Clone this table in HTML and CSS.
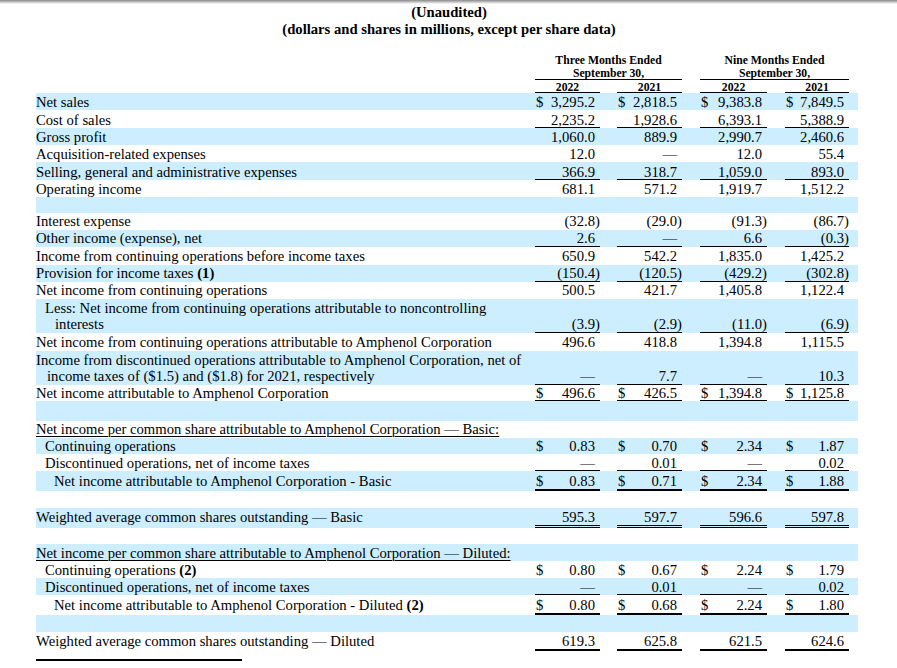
FILE: index.html
```html
<!DOCTYPE html>
<html lang="en">
<head>
<meta charset="utf-8">
<title>Condensed Consolidated Statements of Income</title>
<link rel="stylesheet" href="styles.css">
</head>
<body>
<div class="shade"></div>
<div class="title">
  <div>(Unaudited)</div>
  <div>(dollars and shares in millions, except per share data)</div>
</div>
<table class="fin">
  <colgroup>
    <col class="c-lb"><col class="c-a"><col class="c-g1"><col class="c-b"><col class="c-g2"><col class="c-c"><col class="c-g3"><col class="c-d"><col class="c-end">
  </colgroup>
  <tr class="hd">
    <td></td><td colspan="3" class="hc">Three Months Ended</td><td></td><td colspan="3" class="hc">Nine Months Ended</td><td></td>
  </tr>
  <tr class="hd">
    <td></td><td colspan="3" class="hc u">September 30,</td><td></td><td colspan="3" class="hc u">September 30,</td><td></td>
  </tr>
  <tr class="hd hd3">
    <td></td><td class="hc u">2022</td><td></td><td class="hc u">2021</td><td></td><td class="hc u">2022</td><td></td><td class="hc u">2021</td><td></td>
  </tr>

  <tr class="b h17 lo">
    <td class="lb">Net sales</td>
    <td class="v"><span class="d">$</span>3,295.2</td><td></td>
    <td class="v"><span class="d">$</span>2,818.5</td><td></td>
    <td class="v"><span class="d">$</span>9,383.8</td><td></td>
    <td class="v"><span class="d">$</span>7,849.5</td><td></td>
  </tr>
  <tr class="h18 lo">
    <td class="lb">Cost of sales</td>
    <td class="v u">2,235.2</td><td></td>
    <td class="v u">1,928.6</td><td></td>
    <td class="v u">6,393.1</td><td></td>
    <td class="v u">5,388.9</td><td></td>
  </tr>
  <tr class="b h17 lo">
    <td class="lb">Gross profit</td>
    <td class="v">1,060.0</td><td></td>
    <td class="v">889.9</td><td></td>
    <td class="v">2,990.7</td><td></td>
    <td class="v">2,460.6</td><td></td>
  </tr>
  <tr class="h17 lo">
    <td class="lb">Acquisition-related expenses</td>
    <td class="v">12.0</td><td></td>
    <td class="v">—</td><td></td>
    <td class="v">12.0</td><td></td>
    <td class="v">55.4</td><td></td>
  </tr>
  <tr class="b h18 lo">
    <td class="lb">Selling, general and administrative expenses</td>
    <td class="v u">366.9</td><td></td>
    <td class="v u">318.7</td><td></td>
    <td class="v u">1,059.0</td><td></td>
    <td class="v u">893.0</td><td></td>
  </tr>
  <tr class="h17 lo">
    <td class="lb">Operating income</td>
    <td class="v">681.1</td><td></td>
    <td class="v">571.2</td><td></td>
    <td class="v">1,919.7</td><td></td>
    <td class="v">1,512.2</td><td></td>
  </tr>
  <tr class="b h16"><td></td><td></td><td></td><td></td><td></td><td></td><td></td><td></td><td></td></tr>
  <tr class="h17 up">
    <td class="lb">Interest expense</td>
    <td class="v">(32.8<span class="p">)</span></td><td></td>
    <td class="v">(29.0<span class="p">)</span></td><td></td>
    <td class="v">(91.3<span class="p">)</span></td><td></td>
    <td class="v">(86.7<span class="p">)</span></td><td></td>
  </tr>
  <tr class="b h17 up">
    <td class="lb">Other income (expense), net</td>
    <td class="v u">2.6</td><td></td>
    <td class="v u">—</td><td></td>
    <td class="v u">6.6</td><td></td>
    <td class="v u">(0.3<span class="p">)</span></td><td></td>
  </tr>
  <tr class="h18 up">
    <td class="lb">Income from continuing operations before income taxes</td>
    <td class="v">650.9</td><td></td>
    <td class="v">542.2</td><td></td>
    <td class="v">1,835.0</td><td></td>
    <td class="v">1,425.2</td><td></td>
  </tr>
  <tr class="b h17 up">
    <td class="lb">Provision for income taxes <b>(1)</b></td>
    <td class="v u">(150.4<span class="p">)</span></td><td></td>
    <td class="v u">(120.5<span class="p">)</span></td><td></td>
    <td class="v u">(429.2<span class="p">)</span></td><td></td>
    <td class="v u">(302.8<span class="p">)</span></td><td></td>
  </tr>
  <tr class="h17 up">
    <td class="lb">Net income from continuing operations</td>
    <td class="v">500.5</td><td></td>
    <td class="v">421.7</td><td></td>
    <td class="v">1,405.8</td><td></td>
    <td class="v">1,122.4</td><td></td>
  </tr>
  <tr class="b h34 up">
    <td class="lb"><div class="l1 in9">Less: Net income from continuing operations attributable to noncontrolling</div><div class="in19">interests</div></td>
    <td class="v u">(3.9<span class="p">)</span></td><td></td>
    <td class="v u">(2.9<span class="p">)</span></td><td></td>
    <td class="v u">(11.0<span class="p">)</span></td><td></td>
    <td class="v u">(6.9<span class="p">)</span></td><td></td>
  </tr>
  <tr class="h18 up">
    <td class="lb">Net income from continuing operations attributable to Amphenol Corporation</td>
    <td class="v">496.6</td><td></td>
    <td class="v">418.8</td><td></td>
    <td class="v">1,394.8</td><td></td>
    <td class="v">1,115.5</td><td></td>
  </tr>
  <tr class="b h34 up">
    <td class="lb"><div class="l1">Income from discontinued operations attributable to Amphenol Corporation, net of</div><div class="in11">income taxes of ($1.5) and ($1.8) for 2021, respectively</div></td>
    <td class="v u">—</td><td></td>
    <td class="v u">7.7</td><td></td>
    <td class="v u">—</td><td></td>
    <td class="v u">10.3</td><td></td>
  </tr>
  <tr class="h16">
    <td class="lb">Net income attributable to Amphenol Corporation</td>
    <td class="v u"><span class="d">$</span>496.6</td><td></td>
    <td class="v u"><span class="d">$</span>426.5</td><td></td>
    <td class="v u"><span class="d">$</span>1,394.8</td><td></td>
    <td class="v u"><span class="d">$</span>1,125.8</td><td></td>
  </tr>
  <tr class="b h20"><td></td><td></td><td></td><td></td><td></td><td></td><td></td><td></td><td></td></tr>

  <tr class="h17 ph">
    <td class="lb"><span class="ul">Net income per common share attributable to Amphenol Corporation — Basic:</span></td>
    <td></td><td></td><td></td><td></td><td></td><td></td><td></td><td></td>
  </tr>
  <tr class="b h16">
    <td class="lb in9">Continuing operations</td>
    <td class="v"><span class="d">$</span>0.83</td><td></td>
    <td class="v"><span class="d">$</span>0.70</td><td></td>
    <td class="v"><span class="d">$</span>2.34</td><td></td>
    <td class="v"><span class="d">$</span>1.87</td><td></td>
  </tr>
  <tr class="h17">
    <td class="lb in9">Discontinued operations, net of income taxes</td>
    <td class="v u">—</td><td></td>
    <td class="v u">0.01</td><td></td>
    <td class="v u">—</td><td></td>
    <td class="v u">0.02</td><td></td>
  </tr>
  <tr class="b h20 pt">
    <td class="lb in18">Net income attributable to Amphenol Corporation - Basic</td>
    <td class="v ut"><span class="d">$</span>0.83</td><td></td>
    <td class="v ut"><span class="d">$</span>0.71</td><td></td>
    <td class="v ut"><span class="d">$</span>2.34</td><td></td>
    <td class="v ut"><span class="d">$</span>1.88</td><td></td>
  </tr>
  <tr class="h17"><td></td><td></td><td></td><td></td><td></td><td></td><td></td><td></td><td></td></tr>
  <tr class="b h20 pu">
    <td class="lb">Weighted average common shares outstanding — Basic</td>
    <td class="v uu">595.3</td><td></td>
    <td class="v uu">597.7</td><td></td>
    <td class="v uu">596.6</td><td></td>
    <td class="v uu">597.8</td><td></td>
  </tr>
  <tr class="h16"><td></td><td></td><td></td><td></td><td></td><td></td><td></td><td></td><td></td></tr>

  <tr class="b h17">
    <td class="lb"><span class="ul">Net income per common share attributable to Amphenol Corporation — Diluted:</span></td>
    <td></td><td></td><td></td><td></td><td></td><td></td><td></td><td></td>
  </tr>
  <tr class="h17">
    <td class="lb in9">Continuing operations <b>(2)</b></td>
    <td class="v"><span class="d">$</span>0.80</td><td></td>
    <td class="v"><span class="d">$</span>0.67</td><td></td>
    <td class="v"><span class="d">$</span>2.24</td><td></td>
    <td class="v"><span class="d">$</span>1.79</td><td></td>
  </tr>
  <tr class="b h17">
    <td class="lb in9">Discontinued operations, net of income taxes</td>
    <td class="v u">—</td><td></td>
    <td class="v u">0.01</td><td></td>
    <td class="v u">—</td><td></td>
    <td class="v u">0.02</td><td></td>
  </tr>
  <tr class="h20 pt">
    <td class="lb in18">Net income attributable to Amphenol Corporation - Diluted <b>(2)</b></td>
    <td class="v ut"><span class="d">$</span>0.80</td><td></td>
    <td class="v ut"><span class="d">$</span>0.68</td><td></td>
    <td class="v ut"><span class="d">$</span>2.24</td><td></td>
    <td class="v ut"><span class="d">$</span>1.80</td><td></td>
  </tr>
  <tr class="b h17"><td></td><td></td><td></td><td></td><td></td><td></td><td></td><td></td><td></td></tr>
  <tr class="h19 pt">
    <td class="lb">Weighted average common shares outstanding — Diluted</td>
    <td class="v ut">619.3</td><td></td>
    <td class="v ut">625.8</td><td></td>
    <td class="v ut">621.5</td><td></td>
    <td class="v ut">624.6</td><td></td>
  </tr>
</table>
<div class="rule"></div>
</body>
</html>
```

FILE: styles.css
```css
html, body {
  margin: 0;
  padding: 0;
  background: #ffffff;
}

body {
  font-family: "Liberation Serif", "Times New Roman", serif;
  font-size: 14.67px;
  color: #000;
  width: 897px;
  height: 668px;
  overflow: hidden;
}

.shade {
  height: 4px;
  background: linear-gradient(to bottom, #8a8a8a 0%, #bdbdbd 45%, #ffffff 100%);
}

.title {
  text-align: center;
  font-weight: bold;
  line-height: 17px;
  padding-left: 1px;
}

.fin {
  margin: 16px 0 0 36px;
  width: 822px;
  table-layout: fixed;
  border-collapse: separate;
  border-spacing: 0;
}

.c-lb { width: 499px; }
.c-a { width: 65px; }
.c-g1 { width: 17px; }
.c-b { width: 65px; }
.c-g2 { width: 18px; }
.c-c { width: 67px; }
.c-g3 { width: 18px; }
.c-d { width: 64px; }
.c-end { width: 9px; }

.fin td {
  padding: 0 0 1.5px 0;
  vertical-align: bottom;
  line-height: 14px;
  white-space: nowrap;
}

/* header */
.fin .hd { height: 13px; }

.fin .hd td {
  padding: 0;
  line-height: 13px;
  font-size: 11.7px;
  font-weight: bold;
  vertical-align: top;
}

.fin .hd3 td {
  line-height: 11px;
  vertical-align: bottom;
}

.hc {
  text-align: center;
}

/* row bands */
.b td { background: #cceeff; }

.h16 { height: 16px; }
.h17 { height: 17px; }
.h18 { height: 18px; }
.h19 { height: 19px; }
.h20 { height: 20px; }
.h34 { height: 34px; }

/* baseline offsets */
.fin .lo td { padding-bottom: 1.5px; }
.fin .up td { padding-bottom: 2.5px; }
.fin .ph td { padding-bottom: 2.5px; }
.fin .pt td { padding-bottom: 3.5px; }
.fin .pu td { padding-bottom: 4.5px; }

.lb { text-align: left; }

.l1 { line-height: 17px; }

.in9 { padding-left: 9px; }
.in11 { padding-left: 11px; }
.in18 { padding-left: 18px; }
.in19 { padding-left: 19px; }

.fin td.in9 { padding-left: 9px; }
.fin td.in18 { padding-left: 18px; }

.ul {
  text-decoration: underline;
  text-underline-offset: 2px;
  text-decoration-thickness: 1px;
}

.fin td.v {
  text-align: right;
  padding-right: 5px;
}

.d {
  float: left;
  padding-left: 1px;
}

.p {
  margin-right: -4.9px;
}

/* underlines */
.u { box-shadow: inset 0 -1px 0 #000; }
.ut { box-shadow: inset 0 -2px 0 #000; }
.uu { box-shadow: inset 0 -1px 0 #000, inset 0 -2px 0 #fff, inset 0 -3px 0 #000; }
.b .uu { box-shadow: inset 0 -1px 0 #000, inset 0 -2px 0 #cceeff, inset 0 -3px 0 #000; }

.rule {
  margin: 8px 0 0 36px;
  width: 206px;
  height: 2px;
  background: #000;
}
```
